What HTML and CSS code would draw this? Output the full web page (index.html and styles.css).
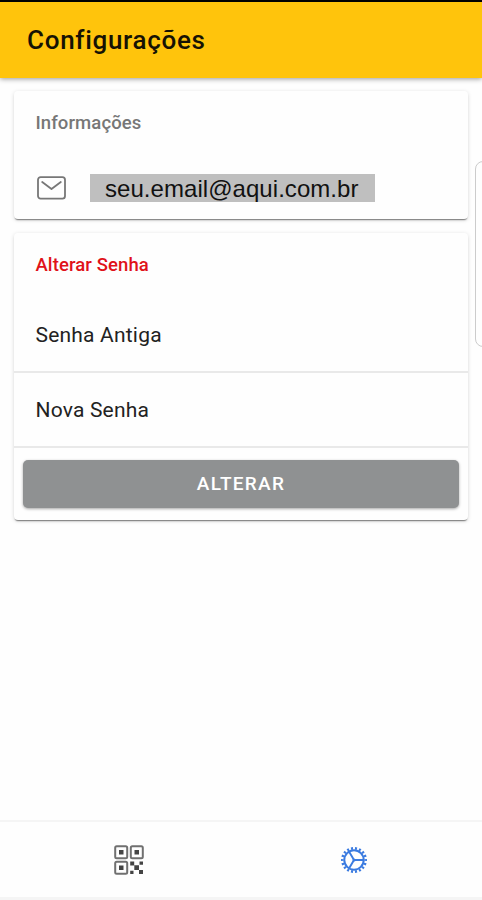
FILE: index.html
```html
<!DOCTYPE html>
<html lang="pt-BR">
<head>
<meta charset="utf-8">
<title>Configurações</title>
<link rel="stylesheet" href="styles.css">
</head>
<body>
<div class="app">
  <header class="header"><h1 class="title">Configurações</h1></header>
  <main class="content">
    <section class="card card-info">
      <h2 class="card-title">Informações</h2>
      <div class="email-row">
        <svg class="mail" viewBox="0 0 30 24" fill="none" stroke="#777" stroke-width="1.8" stroke-linejoin="round" stroke-linecap="round">
          <rect x="1" y="1.200" width="27" height="21.400" rx="2.600"/>
          <path d="M5.200 6l9.300 7 9.300-7"/>
        </svg>
        <span class="email">seu.email@aqui.com.br</span>
      </div>
    </section>
    <section class="card card-password">
      <h2 class="card-title danger">Alterar Senha</h2>
      <div class="field first"><span>Senha Antiga</span></div>
      <div class="field"><span>Nova Senha</span></div>
      <button class="submit">ALTERAR</button>
    </section>
  </main>
  <nav class="tabs">
    <a class="tab">
      <svg class="qr" viewBox="0 0 30 30" fill="none" stroke="#707070" stroke-width="2">
        <rect x="1.200" y="1.200" width="12" height="12" rx="1.500"/>
        <rect x="16.800" y="1.200" width="12" height="12" rx="1.500"/>
        <rect x="1.200" y="16.800" width="12" height="12" rx="1.500"/>
        <path fill="#444" stroke="none" d="M5 5h4.500v4.500H5zM20.500 5H25v4.500h-4.500zM5 20.500h4.500V25H5zM20.300 20.300H25V25h-4.700zM16.200 16.400h4v4h-4zM25.500 16.400H29v3.300h-3.500zM16.200 25.800h3.300V29h-3.300zM25 25h4v4h-4z"/>
      </svg>
    </a>
    <a class="tab">
      <svg class="gear" viewBox="0 0 28 28" fill="none" stroke="#3b7be0">
        <circle cx="14" cy="14" r="9.700" stroke-width="2"/>
        <circle cx="14" cy="14" r="11.700" stroke-width="2.600" pathLength="36" stroke-dasharray="1 1" stroke-dashoffset=".5"/>
        <path stroke-width="1.900" d="M14 14h10M14 14L9 5.400M14 14L9 22.600"/>
        <circle cx="14" cy="14" r="1.500" fill="#3b7be0" stroke="none"/>
      </svg>
    </a>
  </nav>
  <div class="edge-handle"></div>
</div>
</body>
</html>
```
FILE: styles.css
```css
* { box-sizing: border-box; }
body { margin: 0; background: #fefefe; font-family: Roboto, sans-serif; }
.app {
  position: relative;
  display: flex;
  flex-direction: column;
  height: 900px;
  overflow: hidden;
}
.header {
  display: flex;
  align-items: center;
  height: 78px;
  padding-left: 27px;
  border-top: 2px solid #000;
  background: #ffc40c;
  box-shadow: 0 1px 5px rgba(0, 0, 0, .4);
}
.title { margin: 0; font-size: 26px; font-weight: 500; line-height: 30px; letter-spacing: .700px; color: #161204; }
.content {
  flex: 1;
  display: flex;
  flex-direction: column;
  gap: 14px;
  padding: 13px 14px 0;
}
.card {
  display: flex;
  flex-direction: column;
  border-radius: 4px;
  background: #fefefe;
  box-shadow: 0 2px 1px -1px rgba(0, 0, 0, .3), 0 2px 2px -1px rgba(0, 0, 0, .25), 0 1px 4px rgba(0, 0, 0, .14);
}
.card-info { height: 128px; }
.card-password { height: 287px; }
.card-title { margin: 0; padding: 20px 0 0 21.500px; font-size: 18.500px; font-weight: 500; line-height: 24px; letter-spacing: .100px; color: #777; }
.danger { color: #e01219; }
.email-row { display: flex; align-items: center; gap: 23px; margin-top: 39px; padding-left: 23px; }
.mail { width: 30px; height: 24px; }
.email {
  width: 285px;
  height: 28px;
  padding-left: 15px;
  background: #bfbfbf;
  font: 24px/29px "Liberation Sans", sans-serif;
  letter-spacing: .050px;
  color: #111;
}
.field {
  display: flex;
  align-items: center;
  height: 75px;
  padding-left: 21.500px;
  border-bottom: 2px solid #e9e9e9;
  font-size: 21px;
  letter-spacing: .200px;
  color: #222;
}
.field.first { height: 96px; padding-top: 22px; }
.submit {
  height: 48px;
  margin: 12px 9px 0;
  padding: 0;
  border: 0;
  border-radius: 5px;
  background: #8f9192;
  box-shadow: 0 1px 3px rgba(0, 0, 0, .35);
  font: 500 19px/48px Roboto, sans-serif;
  letter-spacing: 1.300px;
  color: #fff;
}
.tabs {
  display: flex;
  height: 80px;
  border-top: 2px solid #f5f5f5;
  border-bottom: 3px solid #f5f5f5;
}
.tab { flex: 1; display: flex; justify-content: center; align-items: center; }
.tab:first-child { padding-left: 17px; }
.tab:last-child { padding-right: 16px; }
.qr { width: 30px; height: 30px; }
.gear { width: 28px; height: 28px; }
.edge-handle {
  position: absolute;
  top: 161px;
  left: 475px;
  width: 20px;
  height: 186px;
  border: 1.500px solid #ccc;
  border-radius: 8px;
}
```
